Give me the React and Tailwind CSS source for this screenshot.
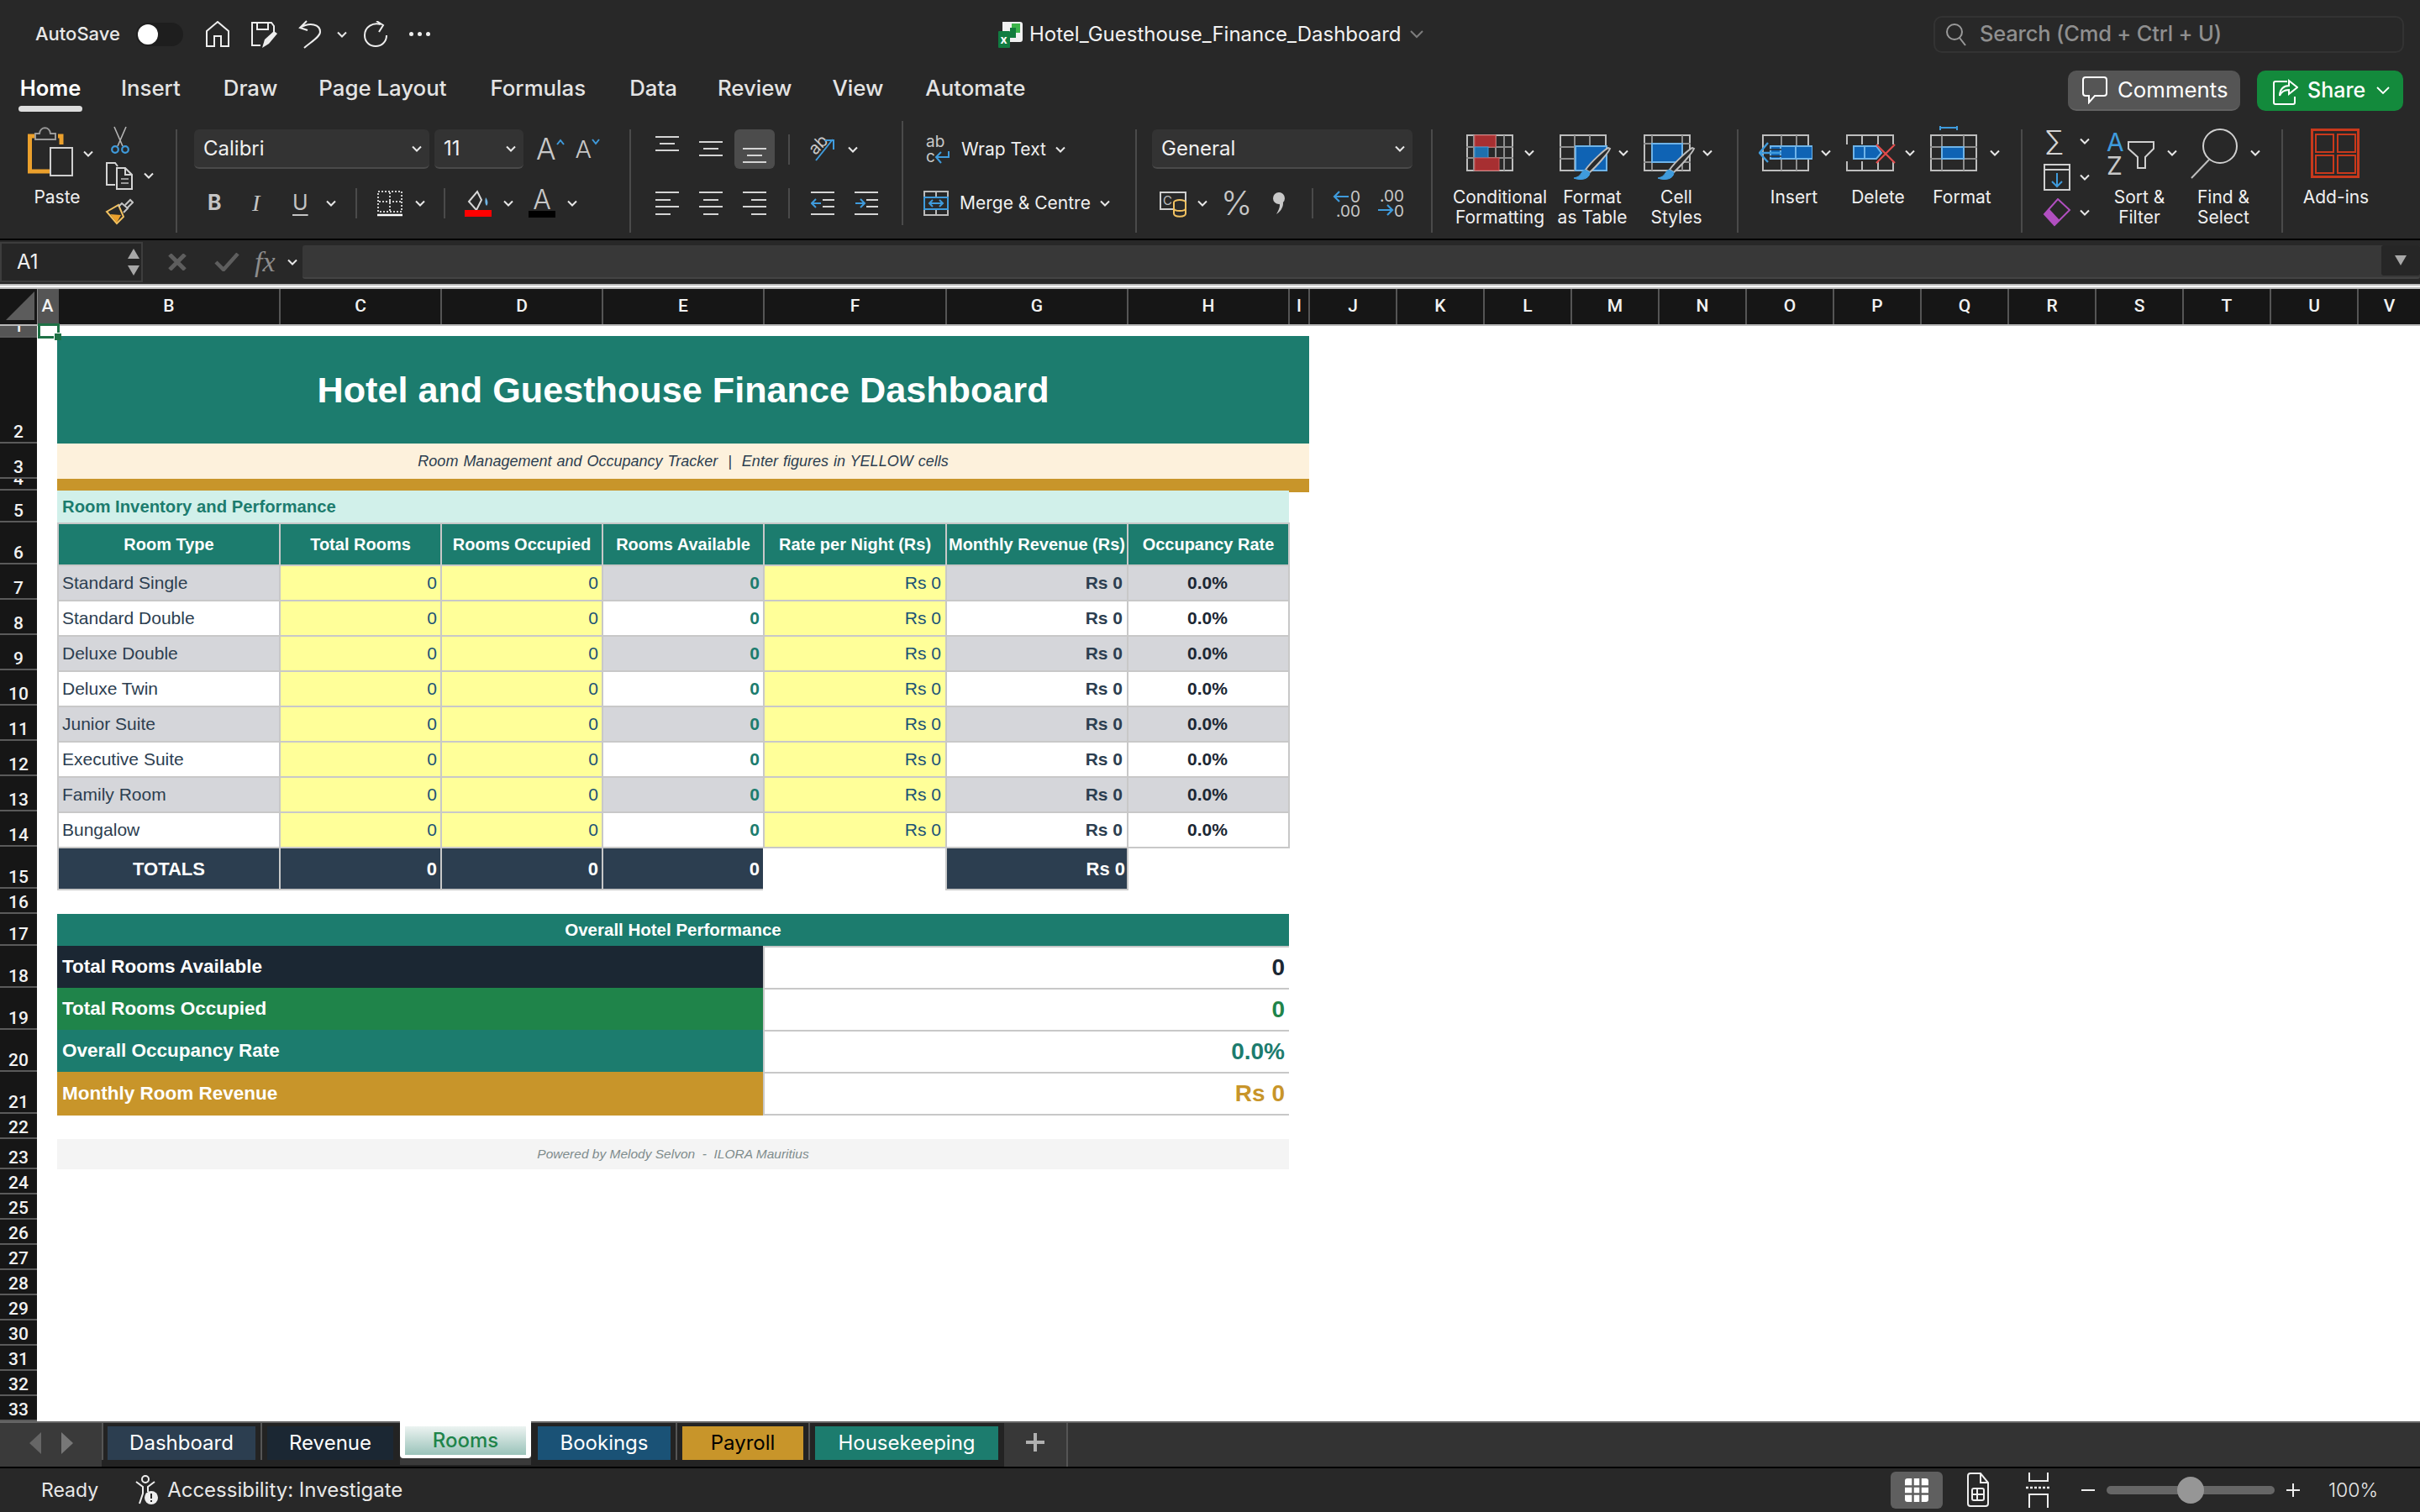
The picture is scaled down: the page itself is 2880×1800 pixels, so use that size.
import React from 'react';

const LINE = '#d4d4d4';
const BLUE = '#3f9bdc';
const FILL = '#0f63b4';

const Caret = ({ className = '' }) => (
  <svg width="12" height="8" viewBox="0 0 12 8" className={`shrink-0 ${className}`}>
    <path d="M1 1.5l5 5 5-5" stroke="#e8e8e8" strokeWidth="2" fill="none" />
  </svg>
);

// --- Alignment and indent lines ---
const Lines = ({ h, rows, children }) => (
  <svg width="28" height={h} viewBox={`0 0 28 ${h}`} className="shrink-0">
    {rows.map(([x1, x2, y], i) => (
      <path key={i} d={`M${x1} ${y}H${x2}`} stroke={LINE} strokeWidth="2" />
    ))}
    {children}
  </svg>
);

const PasteIcon = () => (
  <svg width="56" height="62" viewBox="34 153 56 62" className="shrink-0">
    <path d="M42 165H36.5V207H60" fill="none" stroke="#eba02c" strokeWidth="5" />
    <path d="M70 165H74V175" fill="none" stroke="#eba02c" strokeWidth="5" />
    <path d="M43 169V162H48C49 153 60 153 61 162H67V169Z" fill="#2a2a2a" stroke="#9a9a9a" strokeWidth="2" />
    <rect x="61" y="179" width="26" height="33" fill="none" stroke="#cfcfcf" strokeWidth="2" />
  </svg>
);

const ScissorsIcon = () => (
  <svg width="24" height="34" viewBox="0 0 24 34" className="shrink-0">
    <path d="M5 1L15 24M19 1L9 24" stroke="#b5b5b5" strokeWidth="1.6" fill="none" />
    <circle cx="6" cy="28" r="3.8" fill="none" stroke={BLUE} strokeWidth="2.2" />
    <circle cx="18" cy="28" r="3.8" fill="none" stroke={BLUE} strokeWidth="2.2" />
  </svg>
);

const CopyIcon = () => (
  <svg width="34" height="34" viewBox="0 0 34 34" className="shrink-0">
    <path d="M12 28H2V2H12L15 6" fill="none" stroke={LINE} strokeWidth="2" />
    <path d="M14 8H24L32 16V33H14Z M24 8V16H32" fill="none" stroke={LINE} strokeWidth="2" />
    <path d="M19 21H28M19 26H28" stroke="#999" strokeWidth="2" />
  </svg>
);

const BrushIcon = () => (
  <svg width="34" height="32" viewBox="0 0 34 32" className="shrink-0">
    <path d="M2 16L16 8L22 22L14 30Z" fill="#2a2a2a" stroke="#f2c261" strokeWidth="2" />
    <path d="M6 19L19 20L14 29Z" fill="#eba02c" />
    <path d="M16 10L20 6L27 12L22 17M24 8L30 2L33 5L27 11" fill="none" stroke="#c6c6c6" strokeWidth="2" />
  </svg>
);

const BorderIcon = () => (
  <svg width="32" height="32" viewBox="0 0 32 32" className="shrink-0">
    <rect x="2" y="2" width="28" height="24" fill="none" stroke="#cfcfcf" strokeWidth="2" strokeDasharray="2 2" />
    <path d="M16 3V26M3 14H30" stroke="#cfcfcf" strokeWidth="2" strokeDasharray="2 2" />
    <path d="M1 30H31" stroke="#fff" strokeWidth="2.5" />
  </svg>
);

const FillIcon = () => (
  <svg width="32" height="32" viewBox="0 0 32 32" className="shrink-0">
    <path d="M5 14L15 2L20 12L14 24Z" fill="none" stroke="#d8d8d8" strokeWidth="2" />
    <path d="M25 9C28 13 28 17 26 19C24 17 24 13 25 9Z" fill="#6fb5e6" />
    <rect x="0" y="24" width="32" height="8" fill="#ff0000" />
  </svg>
);

const OrientationIcon = () => (
  <svg width="38" height="47" viewBox="0 0 38 47" className="shrink-0">
    <text x="4" y="26" transform="rotate(-45 14 20)" fill="#c8c8c8" fontSize="20" fontFamily="Inter, sans-serif">ab</text>
    <path d="M12 37L32 12M23 13H33V24" stroke={BLUE} strokeWidth="2" fill="none" />
  </svg>
);

const WrapIcon = () => (
  <svg width="30" height="36" viewBox="0 0 30 36" className="shrink-0">
    <text x="0" y="15" fill="#c8c8c8" fontSize="19" fontFamily="Inter, sans-serif">ab</text>
    <text x="0" y="33" fill="#c8c8c8" fontSize="19" fontFamily="Inter, sans-serif">c</text>
    <path d="M27 20V27H13M18 21L12 27L18 34" stroke={BLUE} strokeWidth="2" fill="none" />
  </svg>
);

const MergeIcon = () => (
  <svg width="32" height="32" viewBox="0 0 32 32" className="shrink-0">
    <path d="M2 2H30V30H2ZM16 2V9M16 23V30" fill="none" stroke="#bbb" strokeWidth="2" />
    <rect x="2" y="9" width="28" height="14" fill="#2a2a2a" stroke={BLUE} strokeWidth="2" />
    <path d="M8 16H24M12 12L8 16L12 20M20 12L24 16L20 20" stroke={BLUE} strokeWidth="2" fill="none" />
  </svg>
);

const CurrencyIcon = () => (
  <svg width="34" height="34" viewBox="0 0 34 34" className="shrink-0">
    <rect x="2" y="4" width="30" height="20" fill="none" stroke="#cfcfcf" strokeWidth="2" />
    <text x="5" y="19" fill="#bdbdbd" fontSize="15" fontFamily="Inter, sans-serif">C</text>
    <ellipse cx="25" cy="16" rx="7" ry="3" fill="#2a2a2a" stroke="#f2c261" strokeWidth="2" />
    <path d="M18 16V29C18 34 32 34 32 29V16M18 23C18 27 32 27 32 23" fill="#2a2a2a" stroke="#f2c261" strokeWidth="2" />
  </svg>
);

const CommaIcon = () => (
  <svg width="18" height="28" viewBox="0 0 18 28" className="shrink-0">
    <circle cx="9" cy="8" r="7" fill="#c8c8c8" />
    <path d="M12 9C16 13 14 22 6 27C10 20 11 16 9 13Z" fill="#c8c8c8" />
  </svg>
);

const DecimalLess = () => (
  <svg width="34" height="34" viewBox="0 0 34 34" className="shrink-0">
    <path d="M20 9H4M9 3L3 9L9 15" stroke={BLUE} strokeWidth="2.2" fill="none" />
    <text x="22" y="16" fill="#c8c8c8" fontSize="19" fontFamily="Inter, sans-serif">0</text>
    <text x="5" y="33" fill="#c8c8c8" fontSize="19" fontFamily="Inter, sans-serif">.00</text>
  </svg>
);

const DecimalMore = () => (
  <svg width="34" height="34" viewBox="0 0 34 34" className="shrink-0">
    <text x="5" y="15" fill="#c8c8c8" fontSize="19" fontFamily="Inter, sans-serif">.00</text>
    <path d="M3 25H19M14 19L20 25L14 31" stroke={BLUE} strokeWidth="2.2" fill="none" />
    <text x="22" y="33" fill="#c8c8c8" fontSize="19" fontFamily="Inter, sans-serif">0</text>
  </svg>
);

const GridLines = ({ x, w, vs, hs }) => (
  <>
    <rect x={x + 1} y="11" width={w - 2} height="42" fill="none" stroke="#bdbdbd" strokeWidth="2" />
    {vs.map((v) => <path key={v} d={`M${x + v} 11V53`} stroke="#8e8e8e" strokeWidth="2" />)}
    {hs.map((h) => <path key={h} d={`M${x} ${h}H${x + w}`} stroke="#8e8e8e" strokeWidth="2" />)}
  </>
);

const PaintBrush = ({ dx }) => (
  <g transform={`translate(${dx} 0)`}>
    <path d="M58 26C55 27 38 42 31 52L36 55C44 48 58 32 60 27Z" fill="#2a2a2a" stroke="#bdbdbd" strokeWidth="2" />
    <path d="M30 52C25 54 27 60 17 62C24 65 36 64 36 55Z" fill={BLUE} stroke={BLUE} strokeWidth="1" />
  </g>
);

const CondIcon = () => (
  <svg width="56" height="64" viewBox="0 0 56 64" className="shrink-0">
    <GridLines x={0} w={56} vs={[9, 35, 45]} hs={[25, 38]} />
    <rect x="10" y="11" width="25" height="14" fill="#a72f31" stroke="#d05a5a" />
    <rect x="10" y="25" width="16" height="13" fill="#1e70ae" stroke={BLUE} />
    <rect x="10" y="38" width="29" height="15" fill="#a72f31" stroke="#d05a5a" />
  </svg>
);

const TableIcon = () => (
  <svg width="62" height="64" viewBox="0 0 62 64" className="shrink-0">
    <GridLines x={0} w={56} vs={[18, 36]} hs={[25, 39]} />
    <rect x="19" y="24" width="37" height="29" fill={FILL} stroke="#6eb3e8" strokeWidth="2" />
    <PaintBrush dx={0} />
  </svg>
);

const StylesIcon = () => (
  <svg width="62" height="64" viewBox="0 0 62 64" className="shrink-0">
    <GridLines x={0} w={56} vs={[10, 46]} hs={[21, 43]} />
    <rect x="10" y="21" width="36" height="22" fill={FILL} stroke="#6eb3e8" strokeWidth="2" />
    <PaintBrush dx={0} />
  </svg>
);

const InsertIcon = () => (
  <svg width="64" height="64" viewBox="0 0 64 64" className="shrink-0">
    <GridLines x={4} w={56} vs={[23, 41]} hs={[]} />
    <rect x="14" y="24" width="50" height="15" fill={FILL} stroke="#6eb3e8" strokeWidth="2" />
    <path d="M44 24V39M26 24V39" stroke="#6eb3e8" strokeWidth="2" />
    <path d="M1 32H27M11 20L1 32L11 43" stroke={BLUE} strokeWidth="2.4" fill="none" />
    <path d="M12 28H27M12 36H27" stroke="#2a2a2a" strokeWidth="1.5" />
  </svg>
);

const DeleteIcon = () => (
  <svg width="60" height="64" viewBox="0 0 60 64" className="shrink-0">
    <path d="M1 22V11H56V22M1 42V53H56V42M19 11V22M38 11V22M19 42V53M38 42V53" fill="none" stroke="#bdbdbd" strokeWidth="2" />
    <path d="M9 24H36L42 32L36 39H9Z" fill={FILL} stroke="#6eb3e8" strokeWidth="2" />
    <path d="M22 24V39" stroke="#6eb3e8" strokeWidth="2" />
    <path d="M36 22L58 44M58 22L36 44" stroke="#e24c4c" strokeWidth="2.2" />
  </svg>
);

const FormatIcon = () => (
  <svg width="56" height="64" viewBox="0 0 56 64" className="shrink-0">
    <path d="M12 2H32M12 0V5M32 0V5" stroke={BLUE} strokeWidth="2" />
    <GridLines x={0} w={56} vs={[14, 40]} hs={[25, 39]} />
    <rect x="14" y="25" width="26" height="14" fill={FILL} stroke="#6eb3e8" strokeWidth="2" />
  </svg>
);

const SortIcon = () => (
  <svg width="58" height="64" viewBox="0 0 58 64" className="shrink-0">
    <text x="0" y="30" fill={BLUE} fontSize="30" fontFamily="Inter, sans-serif">A</text>
    <text x="0" y="58" fill="#c8c8c8" fontSize="30" fontFamily="Inter, sans-serif">Z</text>
    <path d="M26 19H56V27L46 37V50H37V37L26 27Z" fill="none" stroke="#cfcfcf" strokeWidth="2" />
  </svg>
);

const FindIcon = () => (
  <svg width="60" height="64" viewBox="0 0 60 64" className="shrink-0">
    <ellipse cx="36" cy="24" rx="20" ry="20" fill="none" stroke="#cfcfcf" strokeWidth="2" />
    <path d="M23 40L2 62" stroke="#bdbdbd" strokeWidth="2" />
  </svg>
);

const AddinsIcon = () => (
  <svg width="58" height="64" viewBox="0 0 58 64" className="shrink-0">
    <rect x="1.5" y="4.5" width="55" height="56" fill="none" stroke="#c9391c" strokeWidth="3" />
    <rect x="6" y="10" width="21" height="21" fill="none" stroke="#c9391c" strokeWidth="2" />
    <rect x="32" y="10" width="21" height="21" fill="none" stroke="#c9391c" strokeWidth="2" />
    <rect x="6" y="35" width="21" height="21" fill="none" stroke="#c9391c" strokeWidth="2" />
    <rect x="32" y="35" width="21" height="21" fill="none" stroke="#c9391c" strokeWidth="2" />
  </svg>
);

const StyleCol = ({ wide, ml, gap, icon, label }) => (
  <div className={`flex flex-col shrink-0 ${wide ? 'w-[120px]' : 'w-[100px]'}`}>
    <div className={`flex items-center h-[64px] ${ml} ${gap}`}>{icon}{gap && <Caret />}</div>
    <div className="mt-[9px] text-center text-[21px] leading-[23.5px] text-[#f0f0f0]">
      {label.map((t) => <div key={t}>{t}</div>)}
    </div>
  </div>
);

const Sep = ({ className = '' }) => <div className={`w-[2px] shrink-0 bg-[#4a4a4a] ${className}`}></div>;

const Select = ({ label, className }) => (
  <div className={`flex items-center justify-between h-[47px] shrink-0 rounded-[6px] bg-[#333333] border-b-2 border-[#4a4a4a] pl-[11px] pr-[9px] text-[24px] text-[#f0f0f0] ${className}`}>
    <span>{label}</span><Caret />
  </div>
);

// --- Top of the window ---
function TitleBar() {
  return (
    <div className="flex items-center h-[80px] pt-[1px] text-[#e8e8e8]">
      <span className="ml-[42px] text-[22px] font-medium w-[120px]">AutoSave</span>
      <div className="relative w-[56px] h-[28px] rounded-full bg-[#1e1e1e]">
        <div className="absolute left-[2px] top-[2px] w-[24px] h-[24px] rounded-full bg-white"></div>
      </div>
      <svg width="30" height="32" viewBox="0 0 30 32" className="ml-[26px]">
        <path d="M2 30V12L15 1L28 12V30H19V18H11V30Z" fill="none" stroke="#eee" strokeWidth="2" />
      </svg>
      <svg width="32" height="32" viewBox="0 0 32 32" className="ml-[24px]">
        <path d="M12 29H2V2H25L28 6V13M8 2V10H21V2" fill="none" stroke="#eee" strokeWidth="2" />
        <path d="M14 32L17 22L28 12L32 15L22 27Z" fill="#eee" />
      </svg>
      <svg width="28" height="34" viewBox="0 0 28 34" className="ml-[25px]">
        <path d="M10 1L2 9L11 12M2 9C14 2 26 5 26 14C26 20 15 26 7 33" fill="none" stroke="#eee" strokeWidth="2" />
      </svg>
      <Caret className="ml-[18px]" />
      <svg width="30" height="32" viewBox="0 0 30 32" className="ml-[19px]">
        <path d="M21 4C12 1 2 7 2 17C2 25 8 30 15 30C22 30 28 25 28 17M16 0L24 5L19 13" fill="none" stroke="#eee" strokeWidth="2" />
      </svg>
      <div className="ml-[25px] flex gap-[5px]">
        <span className="w-[5px] h-[5px] rounded-full bg-[#eee]"></span>
        <span className="w-[5px] h-[5px] rounded-full bg-[#eee]"></span>
        <span className="w-[5px] h-[5px] rounded-full bg-[#eee]"></span>
      </div>
      <svg width="30" height="32" viewBox="0 0 30 32" className="ml-[676px]">
        <path d="M5 1H26C28 1 29 2 29 4V22C29 24 28 25 26 25H5Z" fill="#f0f0f0" />
        <path d="M16 3H26V14H16Z" fill="#3db54a" />
        <path d="M14 8H21V20H14Z" fill="#127c3c" />
        <rect x="0" y="12" width="14" height="20" rx="1" fill="#107c41" />
        <text x="2.5" y="27" fill="#fff" fontSize="14" fontWeight="700" fontFamily="Inter, sans-serif">x</text>
      </svg>
      <span className="ml-[7px] text-[24px] leading-none text-[#f2f2f2] w-[447px] whitespace-nowrap">Hotel_Guesthouse_Finance_Dashboard</span>
      <svg width="16" height="10" viewBox="0 0 16 10" className="ml-[6px] shrink-0"><path d="M1 1l7 7 7-7" stroke="#7d7d7d" strokeWidth="2" fill="none" /></svg>
      <div className="ml-[607px] flex items-center w-[560px] h-[44px] rounded-[10px] border-2 border-[#333333] pl-[12px]">
        <svg width="26" height="30" viewBox="0 0 26 30">
          <circle cx="11" cy="12" r="9" fill="none" stroke="#9a9a9a" strokeWidth="2" />
          <path d="M17 19L24 28" stroke="#9a9a9a" strokeWidth="2" />
        </svg>
        <span className="ml-[15px] text-[25.5px] font-medium text-[#8f8f8f] whitespace-nowrap tracking-[-0.2px]">Search (Cmd + Ctrl + U)</span>
      </div>
    </div>
  );
}

function TabRow() {
  const tabs = [
    ['Insert', 'ml-[46px]'], ['Draw', 'ml-[51px]'], ['Page Layout', 'ml-[49px]'], ['Formulas', 'ml-[52px]'],
    ['Data', 'ml-[52px]'], ['Review', 'ml-[48px]'], ['View', 'ml-[48px]'], ['Automate', 'ml-[50px]'],
  ];
  return (
    <div className="flex items-start h-[60px] pl-[22px]">
      <div className="flex flex-col items-stretch w-[76px] pt-[9px]">
        <span className="text-[25.5px] leading-[32px] font-semibold text-white text-center whitespace-nowrap">Home</span>
        <div className="mt-[5px] h-[7px] rounded-full bg-[#dddddd]"></div>
      </div>
      {tabs.map(([t, ml]) => (
        <span key={t} className={`${ml} pt-[9px] text-[25.8px] leading-[32px] font-medium text-[#e4e4e4] whitespace-nowrap`}>{t}</span>
      ))}
      <div className="ml-auto mt-[4px] flex items-center w-[205px] h-[48px] rounded-[10px] bg-[#555555] border-b-2 border-[#636363] pl-[16px]">
        <svg width="32" height="34" viewBox="0 0 32 34">
          <path d="M5 2H27C29 2 30 3 30 5V21C30 23 29 24 27 24H16L9 32V24H5C3 24 2 23 2 21V5C2 3 3 2 5 2Z" fill="none" stroke="#fff" strokeWidth="2" />
        </svg>
        <span className="ml-[11px] text-[25.8px] text-white whitespace-nowrap">Comments</span>
      </div>
      <div className="ml-[20px] mr-[20px] mt-[4px] flex items-center w-[174px] h-[48px] rounded-[10px] bg-[#138a3c] pl-[19px]">
        <svg width="30" height="34" viewBox="0 0 30 34">
          <path d="M17 6H3C2 6 1 7 1 8V31C1 32 2 33 3 33H24C25 33 26 32 26 31V24" fill="none" stroke="#fff" strokeWidth="2" />
          <path d="M8 23C8 15 13 11 19 11V5L29 13L19 21V16C14 16 10 18 8 23Z" fill="none" stroke="#fff" strokeWidth="2" />
        </svg>
        <span className="ml-[11px] text-[25px] font-medium text-white">Share</span>
        <svg width="16" height="10" viewBox="0 0 16 10" className="ml-[13px]"><path d="M1 1l7 7 7-7" stroke="#fff" strokeWidth="1.8" fill="none" /></svg>
      </div>
    </div>
  );
}

function Ribbon() {
  return (
    <div className="flex h-[144px] border-b-0 text-[#f0f0f0]">
      {/* Clipboard */}
      <div className="flex w-[209px] shrink-0 pt-[10px]">
        <div className="flex flex-col w-[125px] shrink-0 pl-[33px]">
          <div className="flex items-start h-[72px]">
            <PasteIcon />
            <Caret className="ml-[10px] mt-[29px]" />
          </div>
          <span className="mt-[1px] w-[70px] text-center text-[21px] leading-[24px]">Paste</span>
        </div>
        <div className="flex flex-col">
          <div className="ml-[6px] mt-[0px]"><ScissorsIcon /></div>
          <div className="flex items-center mt-[8px]"><CopyIcon /><Caret className="ml-[12px]" /></div>
          <div className="mt-[10px]"><BrushIcon /></div>
        </div>
      </div>
      <Sep className="h-[123px] mt-[14px]" />

      {/* Font */}
      <div className="flex flex-col w-[538px] shrink-0 pt-[14px] pl-[20px]">
        <div className="flex items-center h-[47px]">
          <Select label="Calibri" className="w-[280px]" />
          <Select label="11" className="ml-[6px] w-[106px]" />
          <span className="ml-[15px] text-[35px] font-light leading-none text-[#c8c8c8]">A</span>
          <svg width="10" height="8" viewBox="0 0 10 8" className="mb-[18px]"><path d="M1 7l4-5 4 5" stroke={BLUE} strokeWidth="2" fill="none" /></svg>
          <span className="ml-[13px] text-[29px] font-light leading-none text-[#c8c8c8]">A</span>
          <svg width="10" height="8" viewBox="0 0 10 8" className="mb-[18px]"><path d="M1 1l4 5 4-5" stroke={BLUE} strokeWidth="2" fill="none" /></svg>
        </div>
        <div className="flex items-center h-[36px] mt-[23px]">
          <span className="ml-[16px] w-[16px] text-[25px] font-bold text-[#c4c4c4]">B</span>
          <span className="ml-[37px] w-[14px] text-[28px] italic font-['Liberation_Serif',serif] text-[#c4c4c4]">I</span>
          <span className="ml-[34px] w-[20px] text-[25px] text-[#c4c4c4] underline underline-offset-[5px]">U</span>
          <Caret className="ml-[20px]" />
          <Sep className="ml-[23px] h-[36px]" />
          <div className="ml-[23px]"><BorderIcon /></div>
          <Caret className="ml-[14px]" />
          <Sep className="ml-[22px] h-[36px]" />
          <div className="ml-[23px]"><FillIcon /></div>
          <Caret className="ml-[14px]" />
          <div className="ml-[18px] flex flex-col items-center w-[32px]">
            <span className="text-[32px] leading-[26px] font-light text-[#c8c8c8]">A</span>
            <div className="w-[32px] h-[8px] bg-black"></div>
          </div>
          <Caret className="ml-[14px]" />
        </div>
      </div>
      <Sep className="h-[123px] mt-[14px]" />

      {/* Alignment */}
      <div className="flex w-[322px] shrink-0 pt-[14px]">
        <div className="flex flex-col w-[187px] shrink-0">
          <div className="flex items-center h-[47px] pl-[29px]">
            <Lines h={47} rows={[[0, 28, 9], [5, 23, 17], [0, 28, 25]]} />
            <div className="ml-[24px]"><Lines h={47} rows={[[0, 28, 15], [5, 23, 23], [0, 28, 31]]} /></div>
            <div className="ml-[14px] flex justify-center w-[48px] h-[47px] rounded-[6px] bg-[#4c4c4c]">
              <Lines h={47} rows={[[0, 28, 23], [5, 23, 31], [0, 28, 39]]} />
            </div>
          </div>
          <div className="flex items-center h-[36px] mt-[23px] pl-[29px]">
            <Lines h={36} rows={[[0, 28, 5], [0, 18, 14], [0, 28, 22], [0, 18, 31]]} />
            <div className="ml-[24px]"><Lines h={36} rows={[[0, 28, 5], [5, 23, 14], [0, 28, 22], [5, 23, 31]]} /></div>
            <div className="ml-[24px]"><Lines h={36} rows={[[0, 28, 5], [10, 28, 14], [0, 28, 22], [10, 28, 31]]} /></div>
          </div>
        </div>
        <div className="flex flex-col">
          <div className="flex items-center h-[47px]">
            <Sep className="h-[36px]" />
            <div className="ml-[19px]"><OrientationIcon /></div>
            <Caret className="ml-[12px]" />
          </div>
          <div className="flex items-center h-[36px] mt-[23px]">
            <Sep className="h-[36px]" />
            <div className="ml-[25px]">
              <Lines h={36} rows={[[0, 28, 5], [14, 28, 14], [14, 28, 22], [0, 28, 31]]}>
                <path d="M12 18H1M6 13L1 18L6 23" stroke={BLUE} strokeWidth="2" fill="none" />
              </Lines>
            </div>
            <div className="ml-[24px]">
              <Lines h={36} rows={[[0, 28, 5], [14, 28, 14], [14, 28, 22], [0, 28, 31]]}>
                <path d="M1 18H12M7 13L12 18L7 23" stroke={BLUE} strokeWidth="2" fill="none" />
              </Lines>
            </div>
          </div>
        </div>
      </div>
      <Sep className="h-[124px] mt-[4px]" />

      {/* Wrap and merge */}
      <div className="flex flex-col w-[276px] shrink-0 pt-[14px] text-[21px]">
        <div className="flex items-center h-[47px] pl-[27px]">
          <WrapIcon />
          <span className="ml-[12px] whitespace-nowrap">Wrap Text</span>
          <Caret className="ml-[11px]" />
        </div>
        <div className="flex items-center h-[36px] mt-[23px] pl-[23px]">
          <MergeIcon />
          <span className="ml-[12px] whitespace-nowrap">Merge &amp; Centre</span>
          <Caret className="ml-[11px]" />
        </div>
      </div>
      <Sep className="h-[123px] mt-[14px]" />

      {/* Number */}
      <div className="flex flex-col w-[350px] shrink-0 pt-[14px] pl-[18px]">
        <Select label="General" className="w-[310px]" />
        <div className="flex items-center h-[36px] mt-[23px]">
          <div className="ml-[8px]"><CurrencyIcon /></div>
          <Caret className="ml-[12px]" />
          <span className="ml-[16px] text-[40px] leading-none font-light text-[#c8c8c8] w-[38px] whitespace-nowrap">%</span>
          <div className="ml-[22px]"><CommaIcon /></div>
          <Sep className="ml-[30px] h-[36px]" />
          <div className="ml-[22px]"><DecimalLess /></div>
          <div className="ml-[18px]"><DecimalMore /></div>
        </div>
      </div>
      <Sep className="h-[123px] mt-[14px]" />

      {/* Styles */}
      <div className="flex w-[362px] shrink-0 pt-[10px] pl-[20px]">
        <StyleCol wide ml="pl-[20px]" gap="gap-[13px]" icon={<CondIcon />} label={['Conditional', 'Formatting']} />
        <StyleCol ml="pl-[11px]" gap="gap-[8px]" icon={<TableIcon />} label={['Format', 'as Table']} />
        <StyleCol ml="pl-[11px]" gap="gap-[8px]" icon={<StylesIcon />} label={['Cell', 'Styles']} />
      </div>
      <Sep className="h-[123px] mt-[14px]" />

      {/* Cells */}
      <div className="flex w-[336px] shrink-0 pt-[10px] pl-[16px]">
        <StyleCol ml="pl-[8px]" gap="gap-[10px]" icon={<InsertIcon />} label={['Insert']} />
        <StyleCol ml="pl-[12px]" gap="gap-[10px]" icon={<DeleteIcon />} label={['Delete']} />
        <StyleCol ml="pl-[12px]" gap="gap-[15px]" icon={<FormatIcon />} label={['Format']} />
      </div>
      <Sep className="h-[123px] mt-[14px]" />

      {/* Editing */}
      <div className="flex w-[308px] shrink-0 pt-[10px] pl-[24px]">
        <div className="flex flex-col w-[65px] shrink-0">
          <div className="flex items-center h-[36px]">
            <div className="w-[36px] pl-[4px] text-[34px] leading-none font-light text-[#d4d4d4]">∑</div>
            <Caret className="ml-[8px]" />
          </div>
          <div className="flex items-center h-[34px] mt-[8px]">
            <svg width="34" height="34" viewBox="0 0 34 34" className="shrink-0">
              <path d="M2 2H32V32H2ZM2 8H32" fill="none" stroke="#cfcfcf" strokeWidth="2" />
              <path d="M17 12V28M11 22L17 28L23 22" stroke={BLUE} strokeWidth="2" fill="none" />
            </svg>
            <Caret className="ml-[10px]" />
          </div>
          <div className="flex items-center h-[34px] mt-[8px]">
            <svg width="34" height="34" viewBox="0 0 34 34" className="shrink-0">
              <path d="M18 1L32 14L14 32L2 19Z" fill="none" stroke="#b14fc0" strokeWidth="2" />
              <path d="M8 13L20 26L14 32L2 19Z" fill="#b14fc0" />
            </svg>
            <Caret className="ml-[10px]" />
          </div>
        </div>
        <StyleCol ml="pl-[11px]" gap="gap-[14px]" icon={<SortIcon />} label={['Sort &', 'Filter']} />
        <StyleCol ml="pl-[10px]" gap="gap-[12px]" icon={<FindIcon />} label={['Find &', 'Select']} />
      </div>
      <Sep className="h-[123px] mt-[14px]" />

      {/* Add-ins */}
      <div className="flex pt-[10px] pl-[13px]">
        <StyleCol ml="pl-[20px]" gap="" icon={<AddinsIcon />} label={['Add-ins']} />
      </div>
    </div>
  );
}

function FormulaBar() {
  return (
    <div className="flex items-center h-[54px] shrink-0 bg-[#282828] border-t-2 border-black">
      <div className="flex items-center justify-between w-[170px] h-[48px] shrink-0 bg-[#262626] border-2 border-[#3d3d3d] pl-[18px] pr-[2px] text-[24px] text-[#f0f0f0]">
        <span>A1</span>
        <div className="flex flex-col gap-[8px]">
          <svg width="14" height="12" viewBox="0 0 14 12"><path d="M7 0L14 12H0Z" fill="#a8a8a8" /></svg>
          <svg width="14" height="12" viewBox="0 0 14 12"><path d="M7 12L14 0H0Z" fill="#a8a8a8" /></svg>
        </div>
      </div>
      <svg width="22" height="20" viewBox="0 0 22 20" className="ml-[30px] shrink-0"><path d="M2 1L20 19M20 1L2 19" stroke="#5e5e5e" strokeWidth="5" /></svg>
      <svg width="30" height="22" viewBox="0 0 30 22" className="ml-[33px] shrink-0"><path d="M2 11L11 20L28 1" stroke="#5e5e5e" strokeWidth="4.5" fill="none" /></svg>
      <span className="ml-[18px] w-[30px] text-[34px] leading-none italic font-['Liberation_Serif',serif] text-[#8c8c8c]">fx</span>
      <Caret className="ml-[9px]" />
      <div className="flex justify-end ml-[6px] flex-1 h-[40px] rounded-[3px] bg-[#383838] border-b-2 border-[#444444]">
        <div className="flex items-center justify-center w-[46px] h-[36px] rounded-[3px] bg-[#262626]">
          <svg width="14" height="12" viewBox="0 0 14 12"><path d="M7 12L14 0H0Z" fill="#a8a8a8" /></svg>
        </div>
      </div>
    </div>
  );
}

// --- Sheet ---
const COLS = [
  ['B', 'w-[264px]'], ['C', 'w-[192px]'], ['D', 'w-[192px]'], ['E', 'w-[192px]'], ['F', 'w-[217px]'], ['G', 'w-[216px]'],
  ['H', 'w-[192px]'], ['I', 'w-[24px]'], ['J', 'w-[104px]'], ['K', 'w-[104px]'], ['L', 'w-[104px]'], ['M', 'w-[104px]'],
  ['N', 'w-[104px]'], ['O', 'w-[104px]'], ['P', 'w-[104px]'], ['Q', 'w-[104px]'], ['R', 'w-[104px]'], ['S', 'w-[104px]'],
  ['T', 'w-[104px]'], ['U', 'w-[104px]'], ['V', 'w-[75px]'],
];

function ColumnHeaders() {
  return (
    <div className="flex h-[44px] shrink-0 bg-[#161616] border-b-2 border-[#b8b8b8] font-['Roboto',sans-serif] text-[21px] font-medium text-[#f2f2f2]">
      <div className="flex items-end justify-end w-[44px] shrink-0 pb-[5px] pr-[3px]">
        <svg width="34" height="34" viewBox="0 0 34 34"><path d="M34 0V34H0Z" fill="#5c5c5c" /></svg>
      </div>
      <div className="flex items-center justify-center w-[24px] shrink-0 bg-[#555555] border-l border-[#8a8a8a]">A</div>
      {COLS.map(([c, w]) => (
        <div key={c} className={`flex items-center justify-center shrink-0 border-l-2 border-[#555555] ${w}`}>{c}</div>
      ))}
    </div>
  );
}

const Row = ({ n, h, children, active }) => (
  <div className={`flex shrink-0 ${h}`}>
    <div className={`flex items-end justify-center w-[44px] shrink-0 overflow-hidden border-b-2 border-[#5a5a5a] border-r-0 font-['Roboto',sans-serif] text-[21px] leading-[24px] font-medium text-[#f2f2f2] ${active ? 'bg-[#555555]' : 'bg-[#161616]'}`}>{n}</div>
    <div className="w-[24px] shrink-0"></div>
    {children}
  </div>
);

const CELL = 'flex items-center shrink-0 border-l-2 border-t-2 border-[#c8c8c8]';

const ROOMS = ['Standard Single', 'Standard Double', 'Deluxe Double', 'Deluxe Twin', 'Junior Suite', 'Executive Suite', 'Family Room', 'Bungalow'];

const HEADINGS = [
  ['Room Type', 'w-[264px]'], ['Total Rooms', 'w-[192px]'], ['Rooms Occupied', 'w-[192px]'], ['Rooms Available', 'w-[192px]'],
  ['Rate per Night (Rs)', 'w-[217px]'], ['Monthly Revenue (Rs)', 'w-[216px]'], ['Occupancy Rate', 'w-[194px] border-r-2'],
];

const SUMMARY = [
  { n: 18, label: 'Total Rooms Available', value: '0', bg: 'bg-[#1b2733]', color: 'text-[#1b2733]' },
  { n: 19, label: 'Total Rooms Occupied', value: '0', bg: 'bg-[#1f844a]', color: 'text-[#1f844a]' },
  { n: 20, label: 'Overall Occupancy Rate', value: '0.0%', bg: 'bg-[#1c7c6e]', color: 'text-[#1c7c6e]' },
  { n: 21, label: 'Monthly Room Revenue', value: 'Rs 0', bg: 'bg-[#c8952a]', color: 'text-[#c8952a]' },
];

function Sheet() {
  return (
    <div className="flex-1 min-h-0 overflow-hidden bg-white font-['Liberation_Sans',sans-serif]">
      <ColumnHeaders />
      <div className="relative">
        {/* Selected cell A1 */}
        <div className="absolute left-[45px] top-[-3px] w-[26px] h-[18px] border-[3px] border-[#1e7145]"></div>
        <div className="absolute left-[64px] top-[8px] w-[9px] h-[9px] bg-[#1e7145] border-t border-l border-white"></div>

        <Row n={1} h="h-[14px]" active />
        <Row n={2} h="h-[126px]">
          <div className="flex items-center justify-center w-[1490px] h-[128px] -mt-[2px] bg-[#1c7c6e] text-[43.2px] font-bold text-white">Hotel and Guesthouse Finance Dashboard</div>
        </Row>
        <Row n={3} h="h-[42px]">
          <div className="flex items-center justify-center w-[1490px] bg-[#fdf1dc] text-[18px] italic text-[#2c3e50] whitespace-pre [word-spacing:1px]">Room Management and Occupancy Tracker  |  Enter figures in YELLOW cells</div>
        </Row>
        <Row n={4} h="h-[14px]">
          <div className="w-[1490px] bg-[#c8952a]"></div>
        </Row>
        <Row n={5} h="h-[38px]">
          <div className="flex items-center w-[1466px] pl-[6px] bg-[#d1f0ea] text-[20.3px] font-bold text-[#1c7c6e]">Room Inventory and Performance</div>
          <div className="w-[24px] h-[2px] bg-[#c8952a]"></div>
        </Row>
        <Row n={6} h="h-[50px]">
          {HEADINGS.map(([t, w]) => (
            <div key={t} className={`${CELL} ${w} justify-center bg-[#1c7c6e] text-[20px] font-bold text-white whitespace-nowrap`}>{t}</div>
          ))}
        </Row>
        {ROOMS.map((room, i) => {
          const bg = i % 2 === 0 ? 'bg-[#d5d6da]' : 'bg-white';
          return (
            <Row key={room} n={i + 7} h="h-[42px]">
              <div className={`${CELL} w-[264px] ${bg} pl-[4px] text-[21px] text-[#2c3e50]`}>{room}</div>
              <div className={`${CELL} w-[192px] justify-end bg-[#ffff99] pr-[4px] text-[21px] text-[#1a5276]`}>0</div>
              <div className={`${CELL} w-[192px] justify-end bg-[#ffff99] pr-[4px] text-[21px] text-[#1a5276]`}>0</div>
              <div className={`${CELL} w-[192px] justify-end ${bg} pr-[4px] text-[21px] font-bold text-[#1c7c6e]`}>0</div>
              <div className={`${CELL} w-[217px] justify-end bg-[#ffff99] pr-[5px] text-[21px] text-[#1a5276]`}>Rs 0</div>
              <div className={`${CELL} w-[216px] justify-end ${bg} pr-[5px] text-[21px] font-bold text-[#2c3e50]`}>Rs 0</div>
              <div className={`${CELL} w-[194px] border-r-2 justify-center ${bg} pr-[2px] text-[21px] font-bold text-[#1b2733]`}>0.0%</div>
            </Row>
          );
        })}
        <Row n={15} h="h-[50px]">
          <div className={`${CELL} w-[264px] h-[52px] border-b-2 justify-center bg-[#2c3e50] text-[22px] font-bold text-white`}>TOTALS</div>
          <div className={`${CELL} w-[192px] h-[52px] border-b-2 justify-end bg-[#2c3e50] pr-[4px] text-[22px] font-bold text-white`}>0</div>
          <div className={`${CELL} w-[192px] h-[52px] border-b-2 justify-end bg-[#2c3e50] pr-[4px] text-[22px] font-bold text-white`}>0</div>
          <div className={`${CELL} w-[192px] h-[52px] border-b-2 justify-end bg-[#2c3e50] pr-[4px] text-[22px] font-bold text-white`}>0</div>
          <div className="w-[217px] shrink-0 border-t-2 border-[#c8c8c8]"></div>
          <div className={`${CELL} w-[218px] h-[52px] border-b-2 border-r-2 justify-end bg-[#2c3e50] pr-[2px] text-[22px] font-bold text-white`}>Rs 0</div>
          <div className="w-[192px] shrink-0 border-t-2 border-[#c8c8c8]"></div>
        </Row>
        <Row n={16} h="h-[30px]" />
        <Row n={17} h="h-[38px]">
          <div className="flex items-center justify-center w-[1466px] bg-[#1c7c6e] text-[20.5px] font-bold text-white">Overall Hotel Performance</div>
        </Row>
        {SUMMARY.map((s) => (
          <Row key={s.n} n={s.n} h="h-[50px]">
            <div className={`flex items-center w-[840px] shrink-0 pl-[6px] ${s.n === 21 ? 'h-[52px]' : ''} ${s.bg} text-[22.5px] font-bold text-white`}>{s.label}</div>
            <div className={`flex items-center justify-end w-[626px] shrink-0 border-t-2 border-l-2 border-[#c8c8c8] pr-[5px] ${s.n === 21 ? 'h-[52px] border-b-2' : ''} text-[28px] font-bold ${s.color}`}>{s.value}</div>
          </Row>
        ))}
        <Row n={22} h="h-[30px]" />
        <Row n={23} h="h-[36px]">
          <div className="flex items-center justify-center w-[1466px] bg-[#f4f4f4] text-[15.5px] italic text-[#7f8c8d] whitespace-pre">Powered by Melody Selvon  -  ILORA Mauritius</div>
        </Row>
        {[24, 25, 26, 27, 28, 29, 30, 31, 32, 33].map((n) => (
          <Row key={n} n={n} h="h-[30px]" />
        ))}
      </div>
    </div>
  );
}

const TabDivider = () => <div className="w-[2px] h-[44px] -mt-[4px] shrink-0 bg-[#555555]"></div>;

function SheetTabs() {
  return (
    <div className="flex h-[54px] shrink-0 bg-[#333333] border-t-2 border-[#666666] text-[24px]">
      <div className="flex items-center justify-center gap-[24px] w-[121px] h-full shrink-0 bg-[#3a3a3a] pb-[4px]">
        <svg width="14" height="26" viewBox="0 0 14 26"><path d="M14 0V26L0 13Z" fill="#666" /></svg>
        <svg width="14" height="26" viewBox="0 0 14 26"><path d="M0 0V26L14 13Z" fill="#777" /></svg>
      </div>
      <div className="flex items-start h-full w-[1074px] shrink-0 bg-[#232323] pt-[4px]">
        <TabDivider />
        <div className="ml-[5px] flex items-center justify-center w-[176px] h-[40px] bg-[#2c3e50] text-white">Dashboard</div>
        <div className="ml-[6px]"><TabDivider /></div>
        <div className="ml-[6px] flex items-center justify-center w-[150px] h-[40px] bg-[#1b2733] text-white">Revenue</div>
        <div className="ml-[8px] w-[156px] h-[52px] -mt-[6px] shrink-0 bg-[#3a3a3a]">
          <div className="flex justify-center w-[156px] h-[44px] pt-[6px] rounded-b-[4px] bg-white">
            <div className="flex items-center justify-center w-[144px] h-[34px] bg-gradient-to-b from-[#ecf3f1] to-[#9ac3ba] text-[#1f844a] font-medium">Rooms</div>
          </div>
        </div>
        <div className="ml-[8px] flex items-center justify-center w-[158px] h-[40px] bg-[#1a5276] text-white">Bookings</div>
        <div className="ml-[6px]"><TabDivider /></div>
        <div className="ml-[6px] flex items-center justify-center w-[144px] h-[40px] bg-[#c8952a] text-black">Payroll</div>
        <div className="ml-[6px]"><TabDivider /></div>
        <div className="ml-[6px] flex items-center justify-center w-[218px] h-[40px] bg-[#1c7c6e] text-white">Housekeeping</div>
      </div>
      <div className="flex items-center justify-center w-[76px] h-full shrink-0 bg-[#383838] border-r-2 border-[#555555] pb-[6px]">
        <svg width="22" height="22" viewBox="0 0 22 22"><path d="M11 0V22M0 11H22" stroke="#b0b0b0" strokeWidth="4" /></svg>
      </div>
    </div>
  );
}

function StatusBar() {
  return (
    <div className="flex items-center h-[54px] shrink-0 bg-[#282828] border-t-2 border-black text-[23px] text-[#e8e8e8]">
      <span className="ml-[49px]">Ready</span>
      <svg width="32" height="36" viewBox="0 0 32 36" className="ml-[43px] shrink-0">
        <circle cx="13" cy="5" r="4" fill="none" stroke="#eee" strokeWidth="2" />
        <path d="M2 8L10 14V22L6 34M24 8L16 14V20" fill="none" stroke="#eee" strokeWidth="2" />
        <circle cx="20" cy="27" r="8" fill="#eee" />
        <path d="M20 22V28M20 30V32" stroke="#282828" strokeWidth="2" />
      </svg>
      <span className="ml-[7px] text-[24px] whitespace-nowrap">Accessibility: Investigate</span>
      <div className="ml-auto flex items-center justify-center w-[62px] h-[44px] rounded-[6px] bg-[#5f5f5f]">
        <svg width="28" height="28" viewBox="0 0 28 28">
          <path d="M3 0H25C27 0 28 1 28 3V25C28 27 27 28 25 28H3C1 28 0 27 0 25V3C0 1 1 0 3 0Z" fill="#fff" />
          <path d="M9.5 0V28M18.5 0V28M0 9.5H28M0 18.5H28" stroke="#5f5f5f" strokeWidth="2.5" />
        </svg>
      </div>
      <svg width="26" height="42" viewBox="0 0 26 42" className="ml-[29px]">
        <path d="M4 1H16L25 12V37C25 39 24 40 22 40H4C2 40 1 39 1 37V4C1 2 2 1 4 1ZM16 1V12H25" fill="none" stroke="#eee" strokeWidth="2" />
        <rect x="6" y="19" width="14" height="14" rx="2" fill="none" stroke="#eee" strokeWidth="2" />
        <path d="M6 26H20M12 19V33" stroke="#eee" strokeWidth="2" />
      </svg>
      <svg width="30" height="42" viewBox="0 0 30 42" className="ml-[44px]">
        <path d="M4 0V10H26V0M4 42V26H26V42" fill="none" stroke="#eee" strokeWidth="2" />
        <path d="M0 18H30" stroke="#eee" strokeWidth="2.5" strokeDasharray="3 2" />
      </svg>
      <div className="ml-[36px] w-[16px] h-[2px] bg-[#eee]"></div>
      <div className="relative ml-[14px] w-[200px] h-[10px] rounded-full bg-[#666666]">
        <div className="absolute left-[84px] top-[-11px] w-[32px] h-[32px] rounded-full bg-[#969696]"></div>
      </div>
      <svg width="16" height="16" viewBox="0 0 16 16" className="ml-[14px]"><path d="M8 0V16M0 8H16" stroke="#eee" strokeWidth="2" /></svg>
      <span className="ml-[34px] mr-[50px] font-light">100%</span>
    </div>
  );
}

export default function App() {
  return (
    <div className="flex flex-col w-[2880px] h-[1800px] overflow-hidden bg-[#282828] font-['Inter',sans-serif]">
      <TitleBar />
      <TabRow />
      <Ribbon />
      <FormulaBar />
      <div className="h-[6px] shrink-0 bg-white border-y-2 border-[#bdbdbd]"></div>
      <Sheet />
      <SheetTabs />
      <StatusBar />
    </div>
  );
}
